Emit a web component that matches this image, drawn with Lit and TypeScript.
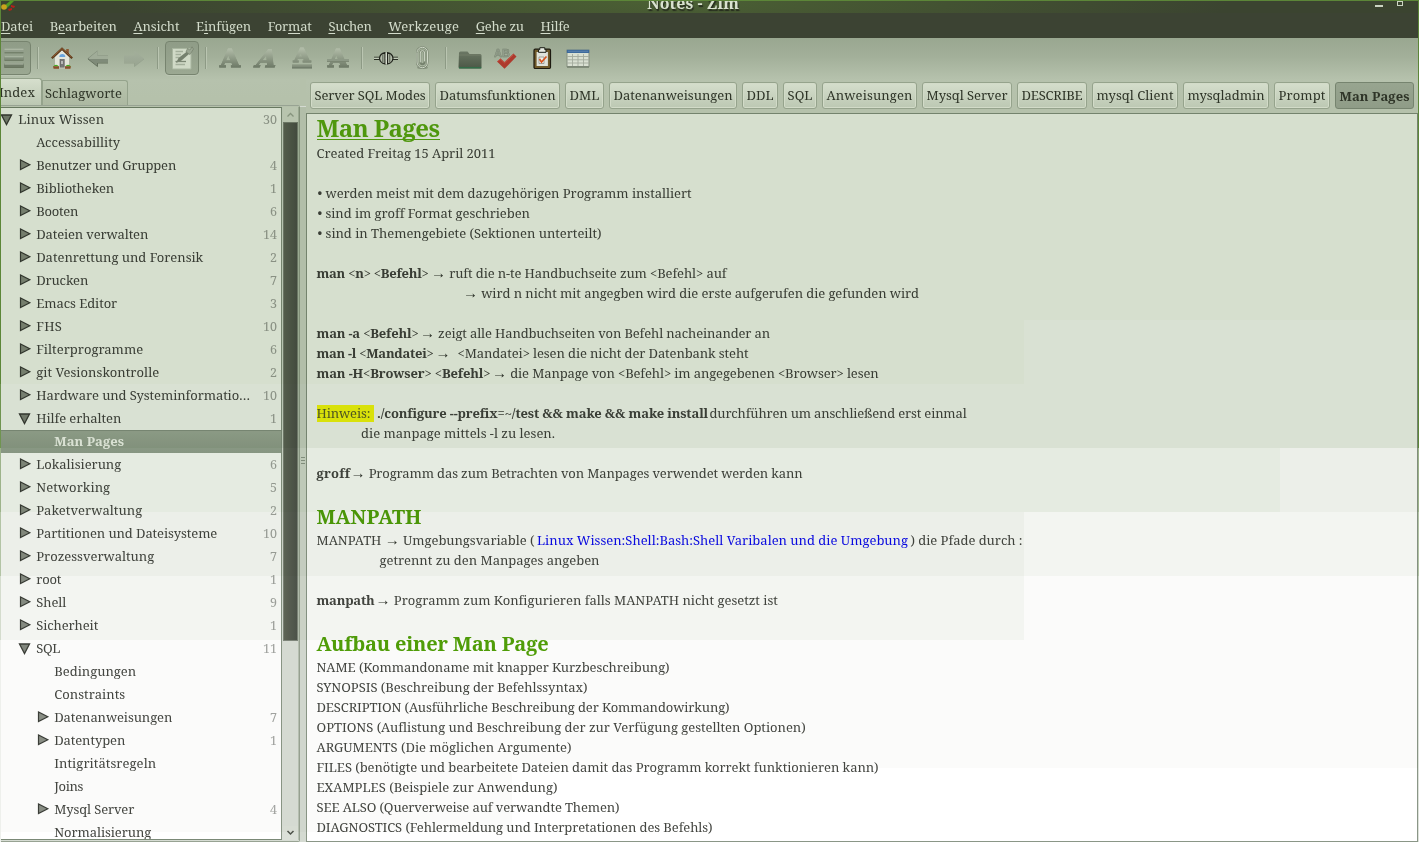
import { LitElement, html, svg, css, nothing } from "lit";
import { customElement, property } from "lit/decorators.js";
import { classMap } from "lit/directives/class-map.js";

/** One line of text whose letter spacing is adjusted to fill a given advance width. */
@customElement("fit-text")
class FitText extends LitElement {
  @property({ type: Number }) w = 0;

  static styles = css`
    :host { display: inline-block; white-space: pre; flex: none; }
    .run { display: inline-block; white-space: pre; }
  `;

  firstUpdated() {
    const run = this.renderRoot.querySelector(".run") as HTMLElement;
    const count = (this.textContent ?? "").length;
    const natural = run.getBoundingClientRect().width;
    if (count > 0 && this.w > 0) run.style.letterSpacing = `${(this.w - natural) / count}px`;
    this.style.width = `${this.w}px`;
  }

  render() {
    return html`<span class="run"><slot></slot></span>`;
  }
}

type Node = { t: string; w: number; d: number; n?: number; s?: "open" | "shut"; sel?: boolean };
const TREE: Node[] = [
  { t: "Linux Wissen", w: 86, d: 0, n: 30, s: "open" },
  { t: "Accessabillity", w: 84, d: 1 },
  { t: "Benutzer und Gruppen", w: 140, d: 1, n: 4, s: "shut" },
  { t: "Bibliotheken", w: 78, d: 1, n: 1, s: "shut" },
  { t: "Booten", w: 42, d: 1, n: 6, s: "shut" },
  { t: "Dateien verwalten", w: 112, d: 1, n: 14, s: "shut" },
  { t: "Datenrettung und Forensik", w: 167, d: 1, n: 2, s: "shut" },
  { t: "Drucken", w: 52, d: 1, n: 7, s: "shut" },
  { t: "Emacs Editor", w: 81, d: 1, n: 3, s: "shut" },
  { t: "FHS", w: 26, d: 1, n: 10, s: "shut" },
  { t: "Filterprogramme", w: 107, d: 1, n: 6, s: "shut" },
  { t: "git Vesionskontrolle", w: 123, d: 1, n: 2, s: "shut" },
  { t: "Hardware und Systeminformatio…", w: 214, d: 1, n: 10, s: "shut" },
  { t: "Hilfe erhalten", w: 85, d: 1, n: 1, s: "open" },
  { t: "Man Pages", w: 70, d: 2, sel: true },
  { t: "Lokalisierung", w: 85, d: 1, n: 6, s: "shut" },
  { t: "Networking", w: 74, d: 1, n: 5, s: "shut" },
  { t: "Paketverwaltung", w: 106, d: 1, n: 2, s: "shut" },
  { t: "Partitionen und Dateisysteme", w: 181, d: 1, n: 10, s: "shut" },
  { t: "Prozessverwaltung", w: 118, d: 1, n: 7, s: "shut" },
  { t: "root", w: 25, d: 1, n: 1, s: "shut" },
  { t: "Shell", w: 30, d: 1, n: 9, s: "shut" },
  { t: "Sicherheit", w: 62, d: 1, n: 1, s: "shut" },
  { t: "SQL", w: 24, d: 1, n: 11, s: "open" },
  { t: "Bedingungen", w: 82, d: 2 },
  { t: "Constraints", w: 71, d: 2 },
  { t: "Datenanweisungen", w: 118, d: 2, n: 7, s: "shut" },
  { t: "Datentypen", w: 71, d: 2, n: 1, s: "shut" },
  { t: "Intigritätsregeln", w: 102, d: 2 },
  { t: "Joins", w: 29, d: 2 },
  { t: "Mysql Server", w: 80, d: 2, n: 4, s: "shut" },
  { t: "Normalisierung", w: 97, d: 2 },
];

const PATHBAR: [string, number][] = [
  ["Server SQL Modes", 120], ["Datumsfunktionen", 125], ["DML", 39], ["Datenanweisungen", 128],
  ["DDL", 36], ["SQL", 34], ["Anweisungen", 95], ["Mysql Server", 90], ["DESCRIBE", 70],
  ["mysql Client", 86], ["mysqladmin", 86], ["Prompt", 56], ["Man Pages", 79],
];

/** Menu entry: text before the mnemonic, mnemonic, rest, width. */
const MENU: [string, string, string, number][] = [
  ["", "D", "atei", 32], ["B", "e", "arbeiten", 67], ["", "A", "nsicht", 46], ["E", "i", "nfügen", 55],
  ["For", "m", "at", 44], ["", "S", "uchen", 43], ["", "W", "erkzeuge", 71], ["", "G", "ehe zu", 48],
  ["", "H", "ilfe", 29],
];

/** Text run: content, width, space before it, style. */
type Run = [string, number, number?, ("b" | "mark" | "link")?];
type Line = Run[] | { h: 1 | 2; t: string; w: number };
const PAGE: Line[] = [
  { h: 1, t: "Man Pages", w: 123 },
  [["Created Freitag 15 April 2011", 179]],
  [],
  [["• werden meist mit dem dazugehörigen Programm installiert", 374, 1]],
  [["• sind im groff Format geschrieben", 212, 1]],
  [["• sind in Themengebiete (Sektionen unterteilt)", 284, 1]],
  [],
  [["man <n> <Befehl>", 112, 0, "b"], ["→ ruft die n-te Handbuchseite zum <Befehl> auf", 295.5, 2.5]],
  [["→ wird n nicht mit angegben wird die erste aufgerufen die gefunden wird", 456, 146.5]],
  [],
  [["man -a <Befehl>", 102, 0, "b"], ["→ zeigt alle Handbuchseiten von Befehl nacheinander an", 350, 1.5]],
  [["man -l <Mandatei>", 117, 0, "b"], ["→", 13, 2], ["<Mandatei> lesen die nicht der Datenbank steht", 291, 9]],
  [["man -H<Browser> <Befehl>", 174, 0, "b"], ["→ die Manpage von <Befehl> im angegebenen <Browser> lesen", 386.5, 1.5]],
  [],
  [["Hinweis: ", 57, 0, "mark"], ["./configure --prefix=~/test && make && make install", 330, 3.5, "b"], ["durchführen um anschließend erst einmal", 257, 2.5]],
  [["die manpage mittels -l zu lesen.", 194, 44.5]],
  [],
  [["groff", 33, 0, "b"], ["→ Programm das zum Betrachten von Manpages verwendet werden kann", 452, 1]],
  [],
  { h: 2, t: "MANPATH", w: 105 },
  [["MANPATH → Umgebungsvariable (", 218], ["Linux Wissen:Shell:Bash:Shell Varibalen und die Umgebung", 371, 2.5, "link"], [") die Pfade durch :", 112, 2.5]],
  [["getrennt zu den Manpages angeben", 220, 63]],
  [],
  [["manpath", 58, 0, "b"], ["→ Programm zum Konfigurieren falls MANPATH nicht gesetzt ist", 402, 1]],
  [],
  { h: 2, t: "Aufbau einer Man Page", w: 232 },
  [["NAME (Kommandoname mit knapper Kurzbeschreibung)", 353]],
  [["SYNOPSIS (Beschreibung der Befehlssyntax)", 271]],
  [["DESCRIPTION (Ausführliche Beschreibung der Kommandowirkung)", 413]],
  [["OPTIONS (Auflistung und Beschreibung der zur Verfügung gestellten Optionen)", 489]],
  [["ARGUMENTS (Die möglichen Argumente)", 255]],
  [["FILES (benötigte und bearbeitete Dateien damit das Programm korrekt funktionieren kann)", 562]],
  [["EXAMPLES (Beispiele zur Anwendung)", 241]],
  [["SEE ALSO (Querverweise auf verwandte Themen)", 303]],
  [["DIAGNOSTICS (Fehlermeldung und Interpretationen des Befehls)", 396]],
];

const icon = (body: unknown) => html`<svg class="icon" width="24" height="24" viewBox="0 0 24 24">
  <defs>
    <linearGradient id="g" x1="0" y1="3" x2="0" y2="21" gradientUnits="userSpaceOnUse"><stop offset="0" stop-color="#b0bba7"/><stop offset="1" stop-color="#6f7b68"/></linearGradient>
    <linearGradient id="f" x1="0" y1="0" x2="0" y2="1"><stop offset="0" stop-color="#6b7764"/><stop offset="1" stop-color="#4b5846"/></linearGradient>
    <linearGradient id="l" x1="0" y1="0" x2="0" y2="1"><stop offset="0" stop-color="#a3af9b"/><stop offset="1" stop-color="#98a491"/></linearGradient>
  </defs>${body}</svg>`;

const bar = (y: number, c: string) => svg`
  <rect x="2" y=${y} width="20" height="4.6" rx=".8" fill=${c}/>
  <rect x="2.5" y=${y + 0.2} width="19" height="1.1" fill="#b1bca9"/>
  <rect x="2.5" y=${y + 3.8} width="19" height="1" fill="#69755f"/>`;

const letter = (extra: unknown, slant = false, small = false) => icon(svg`
  <g transform=${slant ? "translate(5.2 0) skewX(-19)" : ""}>
    <text class="glyph" x="12" y=${small ? 16 : 21} text-anchor="middle" font-size=${small ? 19 : 23.5} textLength=${small ? 17 : 20} lengthAdjust="spacingAndGlyphs" fill="#8d9986" stroke="url(#g)" stroke-width="1.100">A</text>
    <text class="glyph" x="12" y=${small ? 15.7 : 20.7} text-anchor="middle" font-size=${small ? 19 : 23.5} textLength=${small ? 17 : 20} lengthAdjust="spacingAndGlyphs" fill="url(#g)" stroke="url(#g)" stroke-width=".8">A</text>
  </g>${extra}`);

const ICONS = {
  index: icon(svg`${bar(2.5, "#929e8b")}${bar(10, "#828e7b")}${bar(17.2, "#6f7b67")}`),
  home: icon(svg`
    <path d="M4.500 11 L12 4 L19.500 11 V22 H4.500Z" fill="#e4e6dc" stroke="#a5a999" stroke-width=".8"/>
    <rect x="16.200" y="3" width="2.600" height="5" fill="#8c5a35"/>
    <path d="M1.800 12.200 L12 2.800 L22.200 12.200" fill="none" stroke="#5b3718" stroke-width="2.200"/>
    <path d="M2.600 11 L12 2.500 L21.400 11" fill="none" stroke="#9a6238" stroke-width=".9"/>
    <path d="M9.300 11 a3 3 0 0 1 6 0z" fill="#6ba4dc"/>
    <rect x="10" y="13.500" width="4.200" height="8" fill="#777" stroke="#555" stroke-width=".6"/>
    <rect x="11" y="15" width="2" height="3" fill="#b8b8b8"/>
    <path d="M3 20.500 q3-3.400 6.200 0z M15 20.500 q3-3.400 6.200 0z" fill="#3fae21"/>
    <path d="M3 20.300 H9 V22.800 H3.600Z M15 20.300 H21 L20.400 22.800 H15Z" fill="#8a4f2b"/>
    <rect x="9" y="21.500" width="6" height="1.300" fill="#c0c3b6"/>`),
  back: icon(svg`<path d="M1.500 12.500 L11.500 4.500 V9.500 H22 V16.500 H11.500 V20.500Z" fill="#7f8b79"/>
    <path d="M3 12 L11.500 5 V9.800 H22 V13 H3Z" fill="#a0ac98"/><path d="M2 13 L11.500 20.500 V17 H22" fill="none" stroke="#66725f" stroke-width="1"/>`),
  forward: icon(svg`<path d="M22 12.500 L12.500 5 V9.500 H2 V16.500 H12.500 V20.500Z" fill="url(#l)"/>
    <path d="M22 13 L12.500 20.500 V17 H2" fill="none" stroke="#939f8b" stroke-width=".8"/>`),
  edit: icon(svg`
    <path d="M2.500 2.500 H21 V23 H2.500Z" fill="#d0dac7" stroke="#a9b6a0"/>
    <path d="M5.500 5.500 H13 M5.500 8.500 H11 M5.500 11.500 H9.500 M5.500 18.500 H15" stroke="#a3af9b" stroke-width="1.300"/>
    <path d="M6 17 L8.500 12 L17 5.500 L19 8 L11.500 14.500Z" fill="#75816e"/>
    <path d="M16 6 L17.500 2.500 L20 4 L22 .8 L23.500 3 L20 8.500Z" fill="#9aa692" stroke="#74806c" stroke-width=".7"/>
    <path d="M5.500 15.500 H16" stroke="#7b8774" stroke-width="1.300"/>`),
  bold: letter(nothing),
  italic: letter(nothing, true),
  under: letter(svg`<rect x="2" y="18.300" width="20" height="3.700" fill="#818d7a"/><rect x="2" y="18.300" width="20" height="1" fill="#98a48f"/><rect x="2" y="21.500" width="20" height="1" fill="#65715e"/>`, false, true),
  strike: letter(svg`<rect x="1" y="13" width="22" height="2.600" fill="#8d9986"/><rect x="1" y="15.200" width="22" height=".8" fill="#77836f"/>`),
  link: icon(svg`
    <path d="M0 11.200 H8 M0 13.400 H8 M16 11.200 H24 M16 13.400 H24" stroke="#282d23" stroke-width="1.100"/>
    <path d="M0 12.300 H24" stroke="#ced7c5" stroke-width="1.100"/>
    <path d="M11 6.600 Q6 7.500 5.500 12.300 Q6 17 11 18Z M13.500 6.600 Q18.500 7.500 19 12.300 Q18.500 17 13.500 18Z" fill="#b3bcaa" stroke="#20241c" stroke-width="1.200"/>
    <path d="M8.800 8 V16.500 M15.700 8 V16.500" stroke="#697163" stroke-width="1.300"/>
    <path d="M12.250 6.500 V18" stroke="#e1e6db" stroke-width="1.200"/>`),
  clip: icon(svg`
    <ellipse cx="12.500" cy="21.700" rx="5.500" ry="1.400" fill="#8b9783"/>
    <path d="M7 7 V16 a5 5.500 0 0 0 10.500 0 V6 a5 4.500 0 0 0 -10.500 0 M10.300 17 V7 a2 2.200 0 0 1 4.300 0 V16 a2 2 0 0 1 -4.300 0" fill="none" stroke="#76826e" stroke-width="2" stroke-linecap="round"/>
    <path d="M7 7 V16 a5 5.500 0 0 0 10.500 0 V6 a5 4.500 0 0 0 -10.500 0 M10.300 16 V7 a2 2.200 0 0 1 4.300 0 V15" fill="none" stroke="#d0d9c8" stroke-width="1" stroke-linecap="round"/>`),
  folder: icon(svg`
    <path d="M1 7 Q1 5.500 2.500 5.500 H9.500 L11.500 8 H22 Q23.500 8 23.500 9.500 V21 Q23.500 22.500 22 22.500 H2 Q.5 22.500 .5 21Z" fill="url(#f)"/>
    <path d="M1 21.800 H23.300" stroke="#2f7049" stroke-width="1.300"/><path d="M1 9 H23" stroke="#78836f" stroke-width=".7"/>`),
  spell: icon(svg`
    <text class="ab" x="0" y="11" font-size="11" fill="#929d8b" stroke="#75816e" stroke-width=".4">AB</text>
    <path d="M3 15.500 L6.500 12.500 L10.500 16 L19.500 7.500 L22.500 10.500 L10.500 22.800Z" fill="#ae3a2d"/>
    <path d="M3.500 15.500 L6.500 13 L10.500 16.800 L19.500 8.300" fill="none" stroke="#c45a4c" stroke-width="1"/>`),
  task: icon(svg`
    <rect x="4" y="3.200" width="16.500" height="19.300" rx="1.200" fill="#6e5929" stroke="#1d1a10" stroke-width="1.200"/>
    <rect x="6.600" y="6" width="11.300" height="14" fill="#dfe2da"/>
    <path d="M8.500 6.300 V3.600 H9.800 V1.700 H14.800 V3.600 H16 V6.300Z" fill="#e6e9e1" stroke="#1f2119" stroke-width="1"/>
    <path d="M9 11 H14 V17.500 H9Z" fill="#eef0ea" stroke="#8d8f89" stroke-width=".8"/>
    <path d="M9.500 13 L11.500 16 L16.500 10.500" fill="none" stroke="#d9551f" stroke-width="1.700"/>`),
  calendar: icon(svg`
    <rect x="1" y="4" width="22" height="16.500" fill="#d9e0d2" stroke="#858f80" stroke-width="1"/>
    <rect x=".8" y="3.800" width="22.400" height="3.200" fill="#3c6a9c"/><path d="M2 5.300 H22" stroke="#6288b0" stroke-width=".8"/>
    <path d="M1 10.500 H23 M1 13.800 H23 M1 17 H23 M6.500 8 V20 M12 8 V20 M17.500 8 V20" stroke="#a3aa9d" stroke-width=".9"/>
    <path d="M1 21.200 H23" stroke="#6f7a69" stroke-width="1"/>`),
};
const TOOLS: (keyof typeof ICONS | "|")[] = [
  "index", "|", "home", "back", "forward", "|", "edit", "|", "bold", "italic", "under", "strike", "|",
  "link", "clip", "|", "folder", "spell", "task", "calendar",
];

@customElement("app-root")
class AppRoot extends LitElement {
  static styles = css`
    * { box-sizing: border-box; }
    :host {
      display: block; position: relative; width: 1419px; height: 842px; overflow: hidden;
      font-family: "Droid Serif", "Noto Serif", "DejaVu Serif Condensed", "DejaVu Serif", serif;
      font-size: 13px; line-height: 20px; color: #444641;
      background: #d6dcd3;
    }
    .window { display: flex; flex-direction: column; height: 842px; }
    .title {
      height: 13px; display: flex; border-top: 1px solid #5c8638; overflow: hidden; flex: none;
      background: radial-gradient(ellipse 560px 60px at 670px 0, #4b6034, #3b4430);
    }
    .logo { width: 18px; height: 12px; flex: none; }
    .caption { flex: 1; padding-left: 629px; font-size: 16px; font-weight: bold; line-height: 20px; margin-top: -8px; color: #d9e2cf; text-shadow: 1px 2px 1px #262c1e; height: 20px; }
    .controls { display: flex; gap: 14px; padding: 0 16px 0 0; }
    .min { width: 8px; height: 2px; margin-top: 4px; background: #cbd4c2; }
    .max { width: 6px; height: 5px; border: 1px solid #cbd4c2; }
    .menu { height: 25px; flex: none; display: flex; background: #3c4333; color: #d3dccb; padding: 3px 0 0 1px; line-height: 20px; }
    .menu fit-text { margin-right: 16.7px; }
    .menu u { text-underline-offset: 2px; text-decoration-thickness: 1px; }
    .toolbar { height: 40px; flex: none; display: flex; align-items: center; margin-left: -4px; }
    .tool { width: 36px; height: 36px; flex: none; display: grid; place-items: center; }
    .tool.on { border: 1px solid #77846f; border-radius: 4px; background: linear-gradient(#8f9c87, #9ba892); width: 34px; height: 34px; margin: 0 1px; box-shadow: 0 1px 0 #bcc7b4; }
    .sep { width: 12px; height: 22px; flex: none; display: grid; place-items: center; }
    .sep i { width: 2px; height: 22px; background: linear-gradient(90deg, #8d9a85 50%, #bac5b1 50%); }
    .icon { display: block; overflow: visible; }
    .glyph { font-family: "DejaVu Serif", serif; font-weight: bold; }
    .ab { font-family: "Liberation Sans", sans-serif; font-weight: bold; }
    .shade { flex: 1; min-height: 0; display: flex; flex-direction: column; background: linear-gradient(#99a790 0, #a2af99 18px, #b6c2ad 42px, #b5c1ab 60px, #b5c1ab 69px, #d6dcd3 69px); }
    .main { flex: 1; min-height: 0; display: grid; grid-template-columns: 300px 6px 1fr; }
    .side { display: flex; flex-direction: column; min-height: 0; }
    .tabs { display: flex; align-items: flex-end; height: 27px; }
    .tab { height: 25px; border: 1px solid #95a38c; border-bottom: 0; border-radius: 0 3px 0 0; background: linear-gradient(#b8c4ae, #aeba a3); background: linear-gradient(#b8c4ae, #acb8a1); padding: 2px 0 0 2px; width: 86px; color: #2e3427; }
    .tab.cur { height: 27px; width: 42px; border-left: 0; background: linear-gradient(#d6dfcd, #bcc8b3); padding: 3px 0 0 0; }
    .tab.cur fit-text { margin-left: -1px; }
    .frame { flex: 1; min-height: 0; display: flex; border: 1px solid #98a393; border-left: 0; padding: 1px 0; border-radius: 0 2px 2px 0; }
    .tree { width: 282px; border: 1px solid #8a9687; border-left: 0; border-top-color: #7b8977; border-bottom-color: #7b8977; background: #fff; overflow: hidden; }
    .row { height: 23px; display: flex; align-items: center; padding-right: 4px; }
    .row .name { flex: 1; margin-bottom: 2px; padding-left: .2px; }
    .row .num { color: #a3a5a2; font-size: 12.5px; }
    .d0 { padding-left: 0; } .d1 { padding-left: 18px; } .d2 { padding-left: 36px; }
    .arrow { width: 18px; height: 14px; flex: none; }
    .sel { background: linear-gradient(#a3aea0, #95a292); border-top: 1px solid #8b9788; font-weight: bold; color: #fff; }
    .scroll { width: 17px; padding-left: 1px; display: grid; grid-template-rows: 15px 519px 1fr 14px; background: #d9ded7; border-right: 1px solid #b8c1b4; }
    .scroll svg { display: block; background: #dbe0d8; }
    .thumb { background: linear-gradient(90deg, #62695b, #50554d); border: 1px solid #80877c; }
    .split { display: grid; place-items: center; background: linear-gradient(#b5c1ab 28px, #d4dad1 28px); }
    .grip { width: 4px; height: 7px; background: repeating-linear-gradient(#8f998b 0 1px, transparent 1px 3px); }
    .view { display: flex; flex-direction: column; min-width: 0; min-height: 0; }
    .path { display: flex; gap: 5px; height: 35px; flex: none; padding: 4px 0 0 4px; }
    .view .path { background: linear-gradient(transparent 28px, #b5c1ab 28px); }
    .crumb { height: 27px; flex: none; border: 1px solid #95a38c; border-radius: 3px; padding: 2px 0 0 3.5px; background: linear-gradient(#d5decc, #bcc8b3); box-shadow: inset 0 0 0 1px #d2dbc8; color: #2e3427; }
    .crumb.cur { background: linear-gradient(#98a590, #8f9c87); border-color: #76846f; box-shadow: none; font-weight: bold; padding-top: 3px; }
    .page { flex: 1; min-height: 0; overflow: hidden; border: 1px solid #8a9687; background: #fff; padding-left: 9.5px; margin-right: 1px; }
    .line { height: 20px; line-height: 20px; display: flex; }
    .b { font-weight: bold; }
    .thin { font-weight: normal; }
    .arr { font-family: "Liberation Serif", serif; font-weight: normal; font-size: 15px; line-height: 0; color: #30342d; }
    .mark { background: #ffff0c; height: 17px; margin-top: 2px; line-height: 16px; color: #5c6128; }
    .link { color: #0a0af5; }
    .h1, .h2 { font-weight: bold; color: #4e9a06; height: 27px; line-height: 27px; font-size: 20px; }
    .h1 { font-size: 24px; height: 29px; color: #5ead10; }
    .h2 { color: #51a008; }
    .h1 fit-text { height: 25px; line-height: 26px; border-bottom: 1px solid #5ead10; }
    .tint { position: absolute; inset: 113px 0 0 0; mix-blend-mode: multiply; pointer-events: none; }
    .tint svg { display: block; }
    .tint.left { inset: 107px auto auto 0; width: 306px; height: 6px; background: #d6dfce; }
    .edge { position: absolute; top: 0; width: 1px; height: 842px; pointer-events: none; background: linear-gradient(#5c8638 0 448px, #9db38a 448px 512px, #b3c4a5 512px 576px, #cad4c3 576px 640px, #dde2da 640px); }
    .edge.l { left: 0; } .edge.r { right: 0; }
    .edge.l { background: linear-gradient(#5c8638 0 384px, #6f9450 384px 448px, #9db38a 448px 512px, #b3c4a5 512px 576px, #d4dccd 576px 640px, #eef0ec 640px); }
  `;

  private twisty(s?: "open" | "shut") {
    return html`<svg class="arrow" viewBox="0 0 18 14">${
      s === "open" ? svg`<path d="M1.500 2 H11.500 L6.500 11.500Z" fill="#83887f" stroke="#3b3e38" stroke-width="1.300"/>`
      : s === "shut" ? svg`<path d="M2.500 1 V10.500 L11.800 5.700Z" fill="#8b9087" stroke="#3b3e38" stroke-width="1.200"/>`
      : nothing}</svg>`;
  }

  /** Arrows and comparison signs keep their own, lighter face inside bold runs. */
  private pieces(text: string, bold: boolean) {
    return text.split(bold ? /([→<>=~])/ : /(→)/).map((p) =>
      p === "→" ? html`<span class="arr">→</span>` : /^[<>=~]$/.test(p) ? html`<span class="thin">${p}</span>` : p);
  }

  private line(l: Line) {
    if (!Array.isArray(l)) return html`<div class="h${l.h}"><fit-text .w=${l.w}>${l.t}</fit-text></div>`;
    return html`<div class="line">${l.map(([t, w, gap = 0, kind]) => html`<fit-text
      class=${kind ?? ""} .w=${w} style="margin-left:${gap}px">${this.pieces(t, kind === "b")}</fit-text>`)}</div>`;
  }

  render() {
    return html`
      <div class="window">
        <div class="title">
          <svg class="logo" viewBox="0 0 18 12"><path d="M4 5 L10 0 H14 L6 8Z" fill="#4f9a22"/><circle cx="4" cy="6" r="2.800" fill="#c9a31c"/><path d="M8 8 l4-1 v2 l-3 1z M11 4 l4 1 -1 2 -3-1z" fill="#b5201a"/></svg>
          <div class="caption"><fit-text .w=${92}>Notes - Zim</fit-text></div>
          <div class="controls"><i class="min"></i><i class="max"></i></div>
        </div>
        <div class="menu">${MENU.map(([a, m, z, w]) => html`<fit-text .w=${w}>${a}<u>${m}</u>${z}</fit-text>`)}</div>
        <div class="shade">
          <div class="toolbar">${TOOLS.map((t) => t === "|"
            ? html`<span class="sep"><i></i></span>`
            : html`<span class=${classMap({ tool: true, on: t === "index" || t === "edit" })}>${ICONS[t]}</span>`)}</div>
          <div class="main">
            <div class="side">
              <div class="tabs">
                <div class="tab cur"><fit-text .w=${36}>Index</fit-text></div>
                <div class="tab"><fit-text .w=${77}>Schlagworte</fit-text></div>
              </div>
              <div class="frame">
                <div class="tree">${TREE.map((n) => html`<div class=${classMap({ row: true, sel: !!n.sel, [`d${n.d}`]: true })}>
                  ${this.twisty(n.s)}<span class="name"><fit-text .w=${n.w}>${n.t}</fit-text></span><span class="num">${n.n ?? ""}</span></div>`)}</div>
                <div class="scroll">
                  <svg width="15" height="15"><path d="M4.500 9.500 L7.500 6.500 L10.500 9.500" fill="none" stroke="#a0a99b" stroke-width="1.300"/></svg>
                  <div class="thumb"></div><div></div>
                  <svg width="15" height="14"><path d="M4.500 5 L7.500 8 L10.500 5" fill="none" stroke="#4d524a" stroke-width="1.500"/></svg>
                </div>
              </div>
            </div>
            <div class="split"><i class="grip"></i></div>
            <div class="view">
              <div class="path">${PATHBAR.map(([t, w], i) => html`<div class=${classMap({ crumb: true, cur: i === PATHBAR.length - 1 })} style="width:${w}px"><fit-text .w=${w - 9}>${t}</fit-text></div>`)}</div>
              <div class="page">${PAGE.map((l) => this.line(l))}</div>
            </div>
          </div>
        </div>
      </div>
      <div class="tint left"></div>
      <div class="tint"><svg width="1419" height="729" viewBox="0 113 1419 729" shape-rendering="crispEdges">
        <path d="M0 113 H1419 V320 H1024 V384 H0Z" fill="#d6dfce"/>
        <path d="M1024 320 H1419 V448 H0 V384 H1024Z" fill="#d9e1d3"/>
        <path d="M0 448 H1280 V512 H0Z" fill="#e5ebe1"/>
        <path d="M1280 448 H1419 V512 H1024 V576 H0 V512 H1280Z" fill="#ecefe9"/>
        <path d="M1024 512 H1419 V576 H1024 V640 H0 V576 H1024Z" fill="#f3f5f1"/>
        <path d="M1024 576 H1419 V768 H512 V832 H0 V640 H1024Z" fill="#fbfbfa"/>
      </svg></div>
      <i class="edge l"></i><i class="edge r"></i>`;
  }
}
